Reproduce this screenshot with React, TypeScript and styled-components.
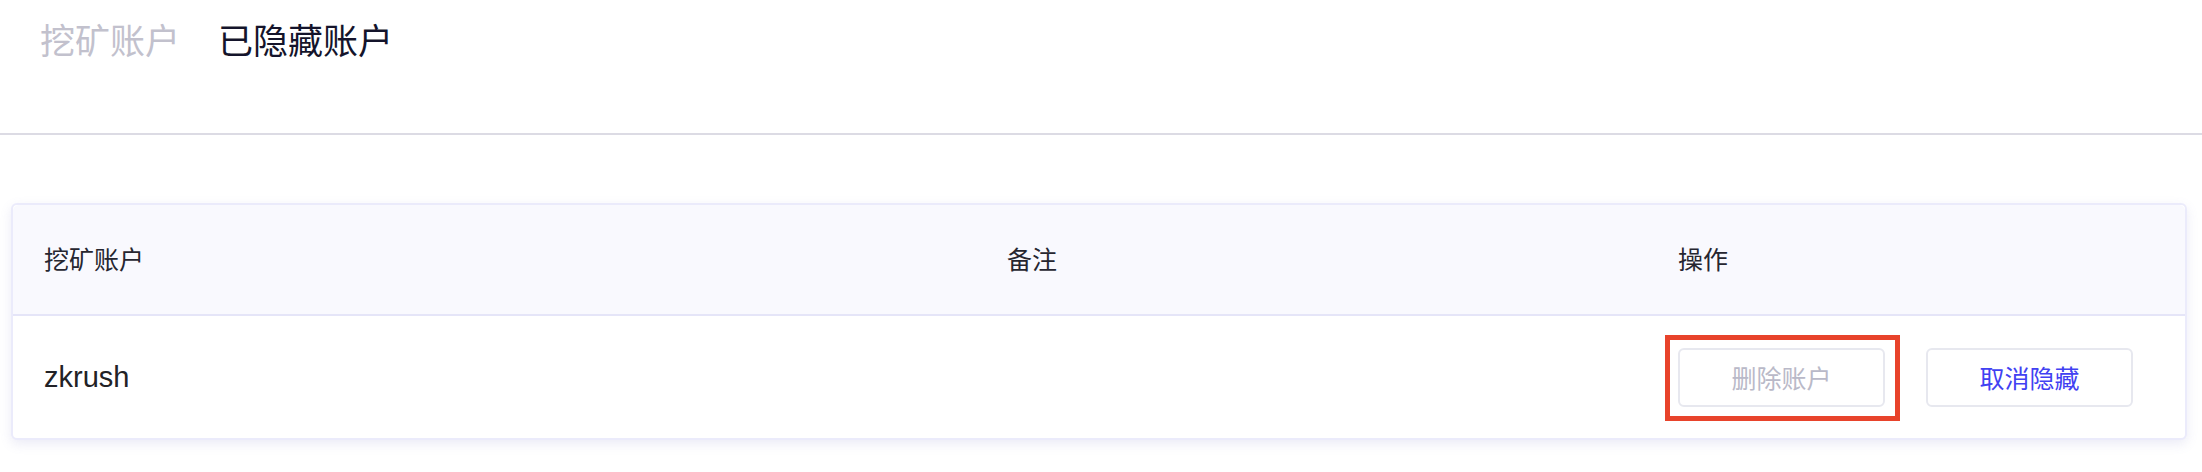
import styled, { createGlobalStyle } from 'styled-components';

const GlobalStyle = createGlobalStyle`
  html, body {
    margin: 0;
    padding: 0;
    background: #ffffff;
  }
  body {
    font-family: 'Liberation Sans', 'Noto Sans CJK SC', sans-serif;
  }
`;

interface Account {
  name: string;
  remark: string;
}

const hiddenAccounts: Account[] = [{ name: 'zkrush', remark: '' }];

export default function App() {
  return (
    <Page>
      <GlobalStyle />
      <TabBar>
        <Tab>挖矿账户</Tab>
        <Tab $active>已隐藏账户</Tab>
      </TabBar>
      <Card>
        <HeaderRow>
          <Cell>挖矿账户</Cell>
          <Cell>备注</Cell>
          <Cell>操作</Cell>
        </HeaderRow>
        {hiddenAccounts.map((account) => (
          <BodyRow key={account.name}>
            <NameCell>{account.name}</NameCell>
            <Cell>{account.remark}</Cell>
            <Actions>
              <Highlight>
                <ActionButton $variant="muted">删除账户</ActionButton>
              </Highlight>
              <ActionButton $variant="primary">取消隐藏</ActionButton>
            </Actions>
          </BodyRow>
        ))}
      </Card>
    </Page>
  );
}

const Page = styled.div`
  width: 2202px;
  min-height: 472px;
`;

const TabBar = styled.div`
  display: flex;
  align-items: flex-start;
  gap: 38px;
  height: 135px;
  padding: 18px 0 0 40px;
  box-sizing: border-box;
  border-bottom: 2px solid #dcdbe4;
`;

const Tab = styled.div<{ $active?: boolean }>`
  font-size: 35px;
  line-height: 48px;
  color: ${({ $active }) => ($active ? '#14142b' : '#c2c1cd')};
  cursor: pointer;
`;

const Card = styled.div`
  margin: 68px 15px 0 11px;
  border: 2px solid #ebebfb;
  border-radius: 6px;
  background: #ffffff;
  box-shadow: 0 4px 12px rgba(110, 110, 190, 0.14);
  overflow: visible;
`;

const Row = styled.div`
  display: grid;
  grid-template-columns: 963px 671px 1fr;
  align-items: center;
  padding-left: 31px;
`;

const HeaderRow = styled(Row)`
  height: 109px;
  background: #f9f9fe;
  border-bottom: 2px solid #e5e5f8;
  border-radius: 6px 6px 0 0;
  color: #262630;
  font-size: 25px;
`;

const BodyRow = styled(Row)`
  height: 122px;
`;

const Cell = styled.div`
  font-size: 25px;
  line-height: 34px;
`;

const NameCell = styled(Cell)`
  font-size: 29px;
  color: #222226;
`;

const Actions = styled.div`
  display: flex;
  align-items: center;
  gap: 41px;
`;

const Highlight = styled.div`
  position: relative;
  display: flex;

  &::after {
    content: '';
    position: absolute;
    top: -13px;
    left: -13px;
    right: -15px;
    bottom: -14px;
    border: 5px solid #e8432b;
    pointer-events: none;
  }
`;

const ActionButton = styled.button<{ $variant: 'muted' | 'primary' }>`
  width: 207px;
  height: 59px;
  padding: 0;
  border: 2px solid #e7e8ef;
  border-radius: 6px;
  background: #ffffff;
  font-family: 'Liberation Sans', 'Noto Sans CJK SC', sans-serif;
  font-size: 25px;
  color: ${({ $variant }) => ($variant === 'primary' ? '#4141f2' : '#b9b9c8')};
  cursor: pointer;
`;
